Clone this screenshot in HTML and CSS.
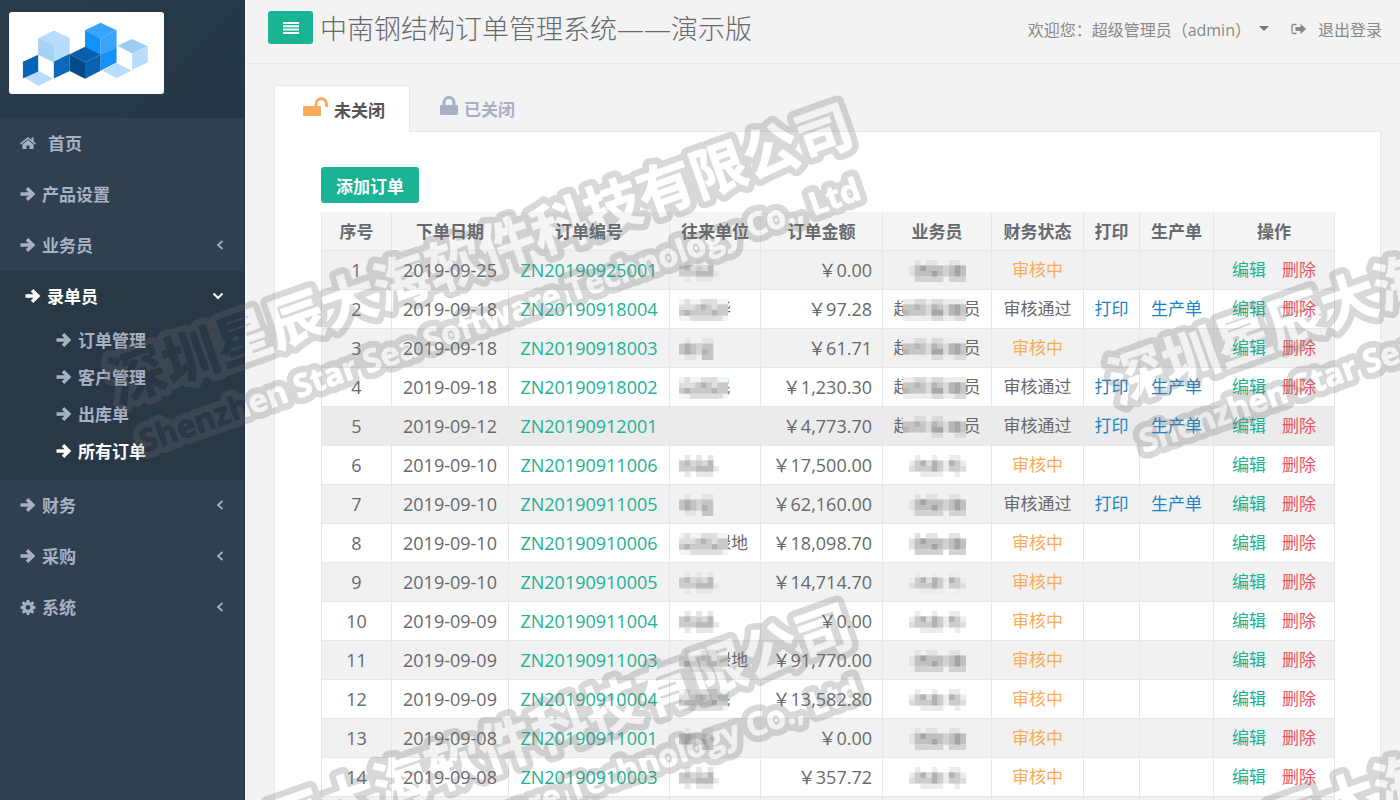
FILE: index.html
```
<!DOCTYPE html>
<html lang="zh-CN">
<head>
    <meta charset="UTF-8">
    <meta name="viewport" content="width=device-width, initial-scale=1.0">
    <title>中南钢结构订单管理系统</title>
    <link rel="stylesheet" href="styles.css">
</head>
<body>
    <!-- 图标与马赛克 -->
    <svg class="defs" aria-hidden="true">
        <symbol id="i-arrow" viewBox="0 0 16 16"><path d="M.5 8H13M7 2.200L12.800 8 7 13.800" fill="none" stroke="currentColor" stroke-width="3.600"/></symbol>
        <symbol id="i-home" viewBox="0 0 16 14"><path d="M8 1L0 7.600l1 1.100L8 3l7 5.700 1-1.100-2.500-2.100V1.500h-2v2.400z"/><path d="M8 4L2.500 8.500V13h4V9.500h3V13h4V8.500z"/></symbol>
        <symbol id="i-cog" viewBox="0 0 16 16"><path fill-rule="evenodd" d="M6.800 1h2.400l.4 2 1.200.5 1.700-1.200 1.700 1.700-1.200 1.700.5 1.200 2 .4v2.400l-2 .4-.5 1.200 1.200 1.700-1.700 1.700-1.700-1.200-1.200.5-.4 2H6.800l-.4-2-1.200-.5-1.700 1.200-1.700-1.700L3 11.300l-.5-1.200-2-.4V7.300l2-.4L3 5.700 1.800 4l1.700-1.700 1.700 1.200L6.400 3zM8 6a2.400 2.400 0 1 0 0 4.800A2.400 2.400 0 0 0 8 6z"/></symbol>
        <symbol id="i-left" viewBox="0 0 8 10"><path d="M6.500 1L2 5l4.500 4" fill="none" stroke="currentColor" stroke-width="1.700"/></symbol>
        <symbol id="i-down" viewBox="0 0 12 8"><path d="M1.500 1.500L6 6l4.500-4.500" fill="none" stroke="currentColor" stroke-width="2"/></symbol>
        <symbol id="i-bars" viewBox="0 0 16 12"><path d="M0 0h16v2H0zM0 3.300h16v2H0zM0 6.600h16v2H0zM0 10h16v2H0z"/></symbol>
        <symbol id="i-unlock" viewBox="0 0 25 20"><rect x="0" y="9" width="18" height="10" rx="1"/><path d="M13 10V7a5 5 0 0 1 10.500 0v3" fill="none" stroke="currentColor" stroke-width="3"/></symbol>
        <symbol id="i-lock" viewBox="0 0 18 20"><rect x="0" y="9" width="18" height="10" rx="1"/><path d="M4 10V6.500a5 5 0 0 1 10 0V10" fill="none" stroke="currentColor" stroke-width="3"/></symbol>
        <symbol id="i-out" viewBox="0 0 15 12"><path d="M5.500 1.500H2.500a1.500 1.500 0 0 0-1.500 1.500v6a1.500 1.500 0 0 0 1.500 1.500h3" fill="none" stroke="currentColor" stroke-width="1.300"/><path d="M4.500 4h5V.7L15 6l-5.500 5.300V8h-5z"/></symbol>

        <symbol id="m-a" viewBox="0 0 7 4" preserveAspectRatio="none"><path fill="#e6e6e6" d="M1 0h1v1h-1zM3 0h1v1h-1zM5 0h1v1h-1zM1 3h1v1h-1zM3 3h3v1h-3zM6 2h1v1h-1z"/><path fill="#cccccc" d="M0 1h6v2h-6z"/><path fill="#bababa" d="M1 1h1v1h-1zM3 2h2v1h-2zM5 1h1v2h-1z"/><path fill="#dadada" d="M2 1h1v1h-1zM4 1h1v1h-1z"/></symbol>
        <symbol id="m-b" viewBox="0 0 7 4" preserveAspectRatio="none"><path fill="#e4e4e4" d="M1 0h1v1h-1zM1 3h2v1h-2zM4 0h2v1h-2z"/><path fill="#c4c4c4" d="M0 1h6v2h-6zM4 3h2v1h-2z"/><path fill="#b0b0b0" d="M1 1h1v2h-1zM4 2h1v1h-1z"/><path fill="#d4d4d4" d="M3 1h1v2h-1z"/></symbol>
        <symbol id="m-c" viewBox="0 0 9 4" preserveAspectRatio="none"><path fill="#f4f4f4" d="M0 0h9v4h-9z"/><path fill="#dedede" d="M0 1h9v2h-9zM1 0h1v1h-1zM4 0h3v1h-3zM2 3h6v1h-6z"/><path fill="#cacaca" d="M0 2h3v1h-3zM3 1h3v2h-3zM7 1h2v2h-2z"/><path fill="#b4b4b4" d="M1 2h1v1h-1zM4 1h1v1h-1zM6 2h1v1h-1z"/></symbol>
        <symbol id="m-d" viewBox="0 0 10 4" preserveAspectRatio="none"><path fill="#e2e2e2" d="M0 1h10v2h-10zM1 0h1v1h-1zM3 0h2v1h-2zM7 0h2v1h-2z"/><path fill="#c0c0c0" d="M1 1h5v2h-5zM7 1h3v2h-3z"/><path fill="#d2d2d2" d="M1 3h5v1h-5zM7 3h3v1h-3zM6 1h1v2h-1z"/><path fill="#a4a4a4" d="M2 1h1v1h-1zM4 2h1v1h-1zM8 1h1v2h-1z"/></symbol>
        <symbol id="m-e" viewBox="0 0 10 4" preserveAspectRatio="none"><path fill="#ececec" d="M0 1h10v2h-10zM1 0h1v1h-1zM4 0h1v1h-1zM7 0h2v1h-2zM2 3h4v1h-4zM8 3h1v1h-1z"/><path fill="#cccccc" d="M1 1h5v2h-5zM7 1h2v2h-2z"/><path fill="#b2b2b2" d="M2 1h1v1h-1zM4 1h1v2h-1zM7 1h1v1h-1z"/><path fill="#dcdcdc" d="M0 2h1v1h-1zM3 1h1v1h-1zM9 2h1v1h-1z"/></symbol>
        <symbol id="m-f" viewBox="0 0 11 4" preserveAspectRatio="none"><path fill="#ededed" d="M0 0h11v4h-11z"/><path fill="#dadada" d="M0 1h11v2h-11zM2 0h2v1h-2zM5 0h2v1h-2zM5 3h2v1h-2zM9 3h2v1h-2z"/><path fill="#c6c6c6" d="M0 1h4v2h-4zM5 1h2v2h-2zM8 1h3v2h-3z"/><path fill="#a6a6a6" d="M5 2h2v1h-2zM9 1h1v2h-1z"/><path fill="#b6b6b6" d="M2 1h1v1h-1zM8 1h1v2h-1zM5 1h1v1h-1zM0 2h1v1h-1z"/></symbol>
    </svg>

    <div class="wrapper">
        <nav class="sidebar">
            <div class="brand">
                <svg class="logo" viewBox="27 37 467 245" role="img" aria-label="logo">
                    <path fill="#b8dcfb" d="M115 115l47-23 48 22v52l-48 21-47-22z"/>
                    <path fill="#a5d2f7" d="M115 115l47 22v50l-47-22z"/>
                    <path fill="#b8dcfb" d="M75 235l40-22 45 23-44 23z"/>
                    <path fill="#0566b5" d="M69 186l46-21v50l-46 21z"/>
                    <path fill="#0b68b8" d="M162 186l48-24v52l-48 22z"/>
                    <path fill="#38a4fb" d="M256 91l47-23 48 23-48 24z"/>
                    <path fill="#0f93fa" d="M256 91l47 24v50l-47-23z"/>
                    <path fill="#38a4fb" d="M303 115l48-24v52l-48 23z"/>
                    <path fill="#1592f8" d="M303 165l48-22v45l-48 25z"/>
                    <path fill="#0660ad" d="M210 163l46-22 47 23-47 23z"/>
                    <path fill="#044a86" d="M210 163l46 24v50l-46-23z"/>
                    <path fill="#0a62b0" d="M256 187l47-23v49l-47 24z"/>
                    <path fill="#b8dcfb" d="M308 213l43-23 45 22-45 23z"/>
                    <path fill="#9ccdf5" d="M354 138l43-21 48 22-47 22z"/>
                    <path fill="#b8dcfb" d="M398 161l47-22v49l-47 22z"/>
                </svg>
            </div>
            <ul class="menu">
                <li><a href="#"><svg class="icon home"><use href="#i-home"/></svg>首页</a></li>
                <li><a href="#"><svg class="icon"><use href="#i-arrow"/></svg>产品设置</a></li>
                <li><a href="#"><svg class="icon"><use href="#i-arrow"/></svg>业务员<svg class="chevron"><use href="#i-left"/></svg></a></li>
                <li class="active">
                    <a href="#"><svg class="icon"><use href="#i-arrow"/></svg>录单员<svg class="chevron"><use href="#i-down"/></svg></a>
                    <ul class="submenu">
                        <li><a href="#"><svg class="icon"><use href="#i-arrow"/></svg>订单管理</a></li>
                        <li><a href="#"><svg class="icon"><use href="#i-arrow"/></svg>客户管理</a></li>
                        <li><a href="#"><svg class="icon"><use href="#i-arrow"/></svg>出库单</a></li>
                        <li class="current"><a href="#"><svg class="icon"><use href="#i-arrow"/></svg>所有订单</a></li>
                    </ul>
                </li>
                <li><a href="#"><svg class="icon"><use href="#i-arrow"/></svg>财务<svg class="chevron"><use href="#i-left"/></svg></a></li>
                <li><a href="#"><svg class="icon"><use href="#i-arrow"/></svg>采购<svg class="chevron"><use href="#i-left"/></svg></a></li>
                <li><a href="#"><svg class="icon"><use href="#i-cog"/></svg>系统<svg class="chevron"><use href="#i-left"/></svg></a></li>
            </ul>
        </nav>

        <div class="page">
            <header class="topbar">
                <button class="btn toggle" type="button" aria-label="菜单"><svg><use href="#i-bars"/></svg></button>
                <h1>中南钢结构订单管理系统——演示版</h1>
                <div class="user">
                    <a href="#">欢迎您：超级管理员（admin）<span class="caret"></span></a>
                    <a href="#"><svg class="out"><use href="#i-out"/></svg>退出登录</a>
                </div>
            </header>

            <main class="content">
                <div class="tabs">
                    <a class="tab active" href="#"><svg class="unlock"><use href="#i-unlock"/></svg>未关闭</a>
                    <a class="tab" href="#"><svg class="lock"><use href="#i-lock"/></svg>已关闭</a>
                </div>
                <div class="panel">
                    <button class="btn add" type="button">添加订单</button>
                    <table>
                        <colgroup>
                            <col class="c-no"><col class="c-date"><col class="c-code"><col class="c-company"><col class="c-money">
                            <col class="c-staff"><col class="c-state"><col class="c-print"><col class="c-sheet"><col class="c-action">
                        </colgroup>
                        <thead>
                            <tr><th>序号</th><th>下单日期</th><th>订单编号</th><th>往来单位</th><th>订单金额</th><th>业务员</th><th>财务状态</th><th>打印</th><th>生产单</th><th>操作</th></tr>
                        </thead>
                        <tbody>
                            <tr><td class="num">1</td><td class="num">2019-09-25</td><td class="num"><a href="#">ZN20190925001</a></td><td class="company"><svg class="mosaic s"><use href="#m-a"/></svg></td><td class="num money">￥0.00</td><td><svg class="mosaic m"><use href="#m-d"/></svg></td><td class="wait">审核中</td><td></td><td></td><td><a href="#">编辑</a><a class="del" href="#">删除</a></td></tr>
                            <tr><td class="num">2</td><td class="num">2019-09-18</td><td class="num"><a href="#">ZN20190918004</a></td><td class="company"><svg class="mosaic l"><use href="#m-c"/></svg>华</td><td class="num money">￥97.28</td><td>超<svg class="mosaic xl"><use href="#m-f"/></svg>员</td><td>审核通过</td><td><a class="blue" href="#">打印</a></td><td><a class="blue" href="#">生产单</a></td><td><a href="#">编辑</a><a class="del" href="#">删除</a></td></tr>
                            <tr><td class="num">3</td><td class="num">2019-09-18</td><td class="num"><a href="#">ZN20190918003</a></td><td class="company"><svg class="mosaic s"><use href="#m-b"/></svg></td><td class="num money">￥61.71</td><td>超<svg class="mosaic xl"><use href="#m-f"/></svg>员</td><td class="wait">审核中</td><td></td><td></td><td><a href="#">编辑</a><a class="del" href="#">删除</a></td></tr>
                            <tr><td class="num">4</td><td class="num">2019-09-18</td><td class="num"><a href="#">ZN20190918002</a></td><td class="company"><svg class="mosaic l"><use href="#m-c"/></svg>民</td><td class="num money">￥1,230.30</td><td>超<svg class="mosaic xl"><use href="#m-f"/></svg>员</td><td>审核通过</td><td><a class="blue" href="#">打印</a></td><td><a class="blue" href="#">生产单</a></td><td><a href="#">编辑</a><a class="del" href="#">删除</a></td></tr>
                            <tr class="hover"><td class="num">5</td><td class="num">2019-09-12</td><td class="num"><a href="#">ZN20190912001</a></td><td></td><td class="num money">￥4,773.70</td><td>超<svg class="mosaic xl"><use href="#m-f"/></svg>员</td><td>审核通过</td><td><a class="blue" href="#">打印</a></td><td><a class="blue" href="#">生产单</a></td><td><a href="#">编辑</a><a class="del" href="#">删除</a></td></tr>
                            <tr><td class="num">6</td><td class="num">2019-09-10</td><td class="num"><a href="#">ZN20190911006</a></td><td class="company"><svg class="mosaic s"><use href="#m-a"/></svg></td><td class="num money">￥17,500.00</td><td><svg class="mosaic m"><use href="#m-e"/></svg></td><td class="wait">审核中</td><td></td><td></td><td><a href="#">编辑</a><a class="del" href="#">删除</a></td></tr>
                            <tr><td class="num">7</td><td class="num">2019-09-10</td><td class="num"><a href="#">ZN20190911005</a></td><td class="company"><svg class="mosaic s"><use href="#m-b"/></svg></td><td class="num money">￥62,160.00</td><td><svg class="mosaic m"><use href="#m-d"/></svg></td><td>审核通过</td><td><a class="blue" href="#">打印</a></td><td><a class="blue" href="#">生产单</a></td><td><a href="#">编辑</a><a class="del" href="#">删除</a></td></tr>
                            <tr><td class="num">8</td><td class="num">2019-09-10</td><td class="num"><a href="#">ZN20190910006</a></td><td class="company"><svg class="mosaic l"><use href="#m-c"/></svg>绿地</td><td class="num money">￥18,098.70</td><td><svg class="mosaic m"><use href="#m-d"/></svg></td><td class="wait">审核中</td><td></td><td></td><td><a href="#">编辑</a><a class="del" href="#">删除</a></td></tr>
                            <tr><td class="num">9</td><td class="num">2019-09-10</td><td class="num"><a href="#">ZN20190910005</a></td><td class="company"><svg class="mosaic s"><use href="#m-a"/></svg></td><td class="num money">￥14,714.70</td><td><svg class="mosaic m"><use href="#m-e"/></svg></td><td class="wait">审核中</td><td></td><td></td><td><a href="#">编辑</a><a class="del" href="#">删除</a></td></tr>
                            <tr><td class="num">10</td><td class="num">2019-09-09</td><td class="num"><a href="#">ZN20190911004</a></td><td class="company"><svg class="mosaic s"><use href="#m-a"/></svg></td><td class="num money">￥0.00</td><td><svg class="mosaic m"><use href="#m-e"/></svg></td><td class="wait">审核中</td><td></td><td></td><td><a href="#">编辑</a><a class="del" href="#">删除</a></td></tr>
                            <tr><td class="num">11</td><td class="num">2019-09-09</td><td class="num"><a href="#">ZN20190911003</a></td><td class="company"><svg class="mosaic l"><use href="#m-c"/></svg>绿地</td><td class="num money">￥91,770.00</td><td><svg class="mosaic m"><use href="#m-d"/></svg></td><td class="wait">审核中</td><td></td><td></td><td><a href="#">编辑</a><a class="del" href="#">删除</a></td></tr>
                            <tr><td class="num">12</td><td class="num">2019-09-09</td><td class="num"><a href="#">ZN20190910004</a></td><td class="company"><svg class="mosaic l"><use href="#m-c"/></svg>民</td><td class="num money">￥13,582.80</td><td><svg class="mosaic m"><use href="#m-e"/></svg></td><td class="wait">审核中</td><td></td><td></td><td><a href="#">编辑</a><a class="del" href="#">删除</a></td></tr>
                            <tr><td class="num">13</td><td class="num">2019-09-08</td><td class="num"><a href="#">ZN20190911001</a></td><td class="company"><svg class="mosaic s"><use href="#m-b"/></svg></td><td class="num money">￥0.00</td><td><svg class="mosaic m"><use href="#m-d"/></svg></td><td class="wait">审核中</td><td></td><td></td><td><a href="#">编辑</a><a class="del" href="#">删除</a></td></tr>
                            <tr><td class="num">14</td><td class="num">2019-09-08</td><td class="num"><a href="#">ZN20190910003</a></td><td class="company"><svg class="mosaic s"><use href="#m-a"/></svg></td><td class="num money">￥357.72</td><td><svg class="mosaic m"><use href="#m-e"/></svg></td><td class="wait">审核中</td><td></td><td></td><td><a href="#">编辑</a><a class="del" href="#">删除</a></td></tr>
                            <tr><td></td><td></td><td></td><td></td><td></td><td></td><td></td><td></td><td></td><td></td></tr>
                        </tbody>
                    </table>
                </div>
            </main>
        </div>
    </div>

    <!-- 水印 -->
    <svg class="watermark">
        <defs>
            <g id="mark-text">
                <g transform="translate(118 404) rotate(-19.500)"><text class="mark-cn">深圳星辰大海软件科技有限公司</text></g>
                <g transform="translate(144 453) rotate(-19.500)"><text class="mark-en">Shenzhen Star Sea Software Technology Co., Ltd</text></g>
            </g>
            <mask id="mark-hole" maskUnits="userSpaceOnUse" x="0" y="0" width="1000" height="600">
                <rect width="1000" height="600" fill="#fff"/>
                <use href="#mark-text" class="mark-cut"/>
            </mask>
            <g id="mark" mask="url(#mark-hole)">
                <use href="#mark-text" class="mark-outline"/>
            </g>
        </defs>
        <use href="#mark"/>
        <use href="#mark" x="1000"/>
        <use href="#mark" y="500"/>
        <use href="#mark" x="1000" y="500"/>
    </svg>
</body>
</html>
```
FILE: styles.css
```
* {
    box-sizing: border-box;
}

body {
    margin: 0;
    font-family: "Open Sans", "Noto Sans CJK SC", sans-serif;
    font-size: 17px;
    color: #676a6c;
    background-color: #2f4050;
}

a {
    color: #1ab394;
    text-decoration: none;
}

ul {
    list-style: none;
    margin: 0;
    padding: 0;
}

svg {
    fill: currentColor;
}

.defs {
    position: absolute;
    width: 0;
    height: 0;
}

.wrapper {
    display: flex;
    height: 100vh;
    overflow: hidden;
}

/* 左侧菜单 */
.sidebar {
    flex: 0 0 245px;
    background-color: #2f4050;
    border-right: 1px solid #233240;
}

.brand {
    height: 118px;
    padding: 12px 9px;
    background: linear-gradient(135deg, #293c4b, #253746);
}

.logo {
    display: block;
    width: 155px;
    height: 82px;
    background-color: #fff;
    border-radius: 3px;
}

.menu a {
    display: flex;
    align-items: center;
    height: 51px;
    padding: 0 20px 2px;
    color: #a7b1c2;
    font-weight: 600;
}

.icon {
    width: 16px;
    height: 16px;
    margin-right: 6px;
}

.icon.home {
    height: 14px;
    margin-right: 12px;
}

.chevron {
    width: 8px;
    height: 10px;
    margin-left: auto;
}

.menu .active {
    padding-bottom: 10px;
    background-color: #293846;
}

.menu .active > a {
    padding-left: 25px;
    color: #fff;
}

.active > a .chevron {
    width: 12px;
    height: 8px;
}

.menu .submenu a {
    height: 37px;
    padding-left: 56px;
}

.menu .submenu .current a {
    color: #fff;
}

/* 顶部 */
.page {
    flex: 1;
    min-width: 0;
    background-color: #f3f3f4;
}

.topbar {
    display: flex;
    align-items: center;
    height: 64px;
    padding: 0 18px 8px 23px;
    border-bottom: 1px solid #e7eaec;
}

.btn {
    border: none;
    border-radius: 3px;
    background-color: #1ab394;
    color: #fff;
    font-family: inherit;
    font-size: 17px;
    cursor: pointer;
}

.toggle {
    width: 45px;
    height: 33px;
    padding: 0;
}

.toggle svg {
    display: block;
    width: 16px;
    height: 12px;
    margin: 0 auto;
}

h1 {
    margin: 0 0 0 7px;
    font-size: 27px;
    font-weight: 300;
    white-space: nowrap;
}

.user {
    display: flex;
    gap: 22px;
    margin-left: auto;
    padding-top: 2px;
    font-size: 16px;
}

.user a {
    display: flex;
    align-items: center;
    color: #888;
    white-space: nowrap;
}

.caret {
    margin-left: 8px;
    border: 5px solid transparent;
    border-top-color: #777;
    border-bottom: none;
}

.out {
    width: 15px;
    height: 12px;
    margin-right: 12px;
}

/* 标签页 */
.content {
    padding: 21px 19px 0 29px;
}

.tabs {
    display: flex;
    gap: 1px;
}

.tab {
    display: flex;
    align-items: center;
    height: 46px;
    padding: 0 24px 0 28px;
    border: 1px solid transparent;
    color: #a7b1c2;
    font-weight: 600;
}

.tab.active {
    margin-bottom: -1px;
    height: 47px;
    border-color: #e7eaec;
    border-bottom: none;
    border-radius: 4px 4px 0 0;
    background-color: #fff;
    color: #555;
    z-index: 1;
}

.unlock {
    width: 25px;
    height: 20px;
    margin: 0 6px 4px 0;
    color: #f8ac59;
}

.lock {
    width: 18px;
    height: 20px;
    margin: 0 6px 4px 0;
}

.panel {
    padding: 35px 46px;
    border: 1px solid #e7eaec;
    background-color: #fff;
}

.add {
    display: block;
    width: 98px;
    height: 36px;
    margin-bottom: 9px;
    padding: 0;
    font-weight: 600;
}

/* 订单表格 */
table {
    width: 100%;
    table-layout: fixed;
    border-collapse: collapse;
}

.c-no { width: 70px; }
.c-date { width: 117px; }
.c-code { width: 161px; }
.c-company { width: 91px; }
.c-money { width: 122px; }
.c-staff { width: 109px; }
.c-state { width: 92px; }
.c-print { width: 56px; }
.c-sheet { width: 74px; }
.c-action { width: 121px; }

th,
td {
    height: 39px;
    padding: 0;
    border: 1px solid #e7e7e7;
    line-height: 24px;
    text-align: center;
    white-space: nowrap;
}

th {
    height: 38px;
    border-top-color: #f5f5f6;
    background-color: #f5f5f6;
    font-weight: 600;
}

tbody tr:nth-child(odd) {
    background-color: #f1f1f1;
}

tbody tr.hover {
    background-color: #ebebeb;
}

.num {
    font-size: 18px;
}

.money {
    padding-right: 10px;
    text-align: right;
}

.company {
    padding-left: 9px;
    text-align: left;
}

.wait {
    color: #f8ac59;
}

.blue {
    color: #1c84c6;
}

.del {
    margin-left: 16px;
    color: #ed5565;
}

.mosaic {
    position: relative;
    height: 22px;
    vertical-align: middle;
}

.mosaic.s {
    width: 40px;
}

.mosaic.m {
    width: 57px;
}

.mosaic.l {
    width: 49px;
    margin-right: -14px;
}

.mosaic.xl {
    width: 63px;
    margin: 0 -2px 0 -8px;
}

/* 水印 */
.watermark {
    position: fixed;
    top: 0;
    left: 0;
    width: 100%;
    height: 100%;
    pointer-events: none;
    z-index: 10;
}

.mark-cn {
    font-family: "Noto Sans CJK SC", sans-serif;
    font-size: 56px;
    font-weight: 700;
}

.mark-en {
    font-family: "Open Sans", sans-serif;
    font-size: 32px;
    font-weight: 700;
}

#mark {
    opacity: 0.27;
}

.mark-outline {
    fill: #716f70;
    stroke: #716f70;
    stroke-width: 14px;
    stroke-linejoin: round;
}

.mark-cut {
    fill: #000;
    stroke: #000;
    stroke-width: 1px;
    stroke-linejoin: round;
}
```
